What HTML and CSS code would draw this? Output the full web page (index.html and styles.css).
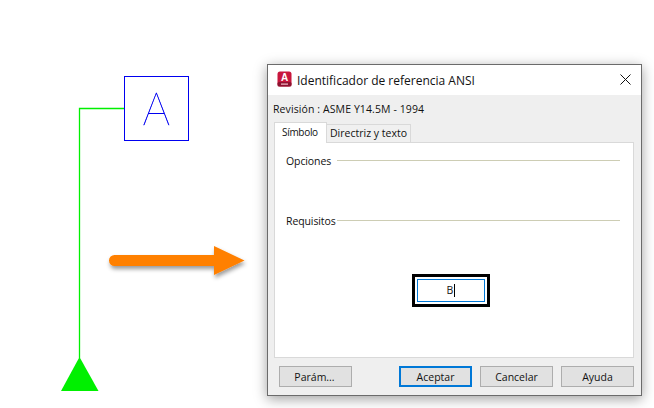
FILE: index.html
```html
<!DOCTYPE html>
<html lang="es">
<head>
<meta charset="utf-8">
<title>Identificador de referencia ANSI</title>
<link rel="stylesheet" href="styles.css">
</head>
<body>
<main class="canvas">
  <svg class="drawing" width="654" height="408" viewBox="0 0 654 408" aria-hidden="true">
    <defs>
      <filter id="arrow-shadow" x="-10%" y="-40%" width="120%" height="200%">
        <feDropShadow dx="1" dy="3" stdDeviation="2" flood-color="#000" flood-opacity="0.4"/>
      </filter>
    </defs>
    <path class="leader" d="M124 108.5H79.500V358"/>
    <polygon class="datum" points="79.500,357 98.500,391 61,391"/>
    <rect class="box" x="124.500" y="76.500" width="64" height="64"/>
    <path class="arrow" filter="url(#arrow-shadow)" d="M114.500 255H214V246L244.500 260.500L214 275V266H114.500A5.500 5.500 0 0 1 114.500 255Z"/>
  </svg>
  <span class="cad-letter">A</span>

  <section class="dialog">
    <header class="titlebar">
      <svg class="app-icon" width="15" height="16" viewBox="0 0 15 16" aria-hidden="true">
        <rect x="0.500" y="0.500" width="14" height="15" rx="2.500" fill="#c8173d"/>
        <rect x="0.500" y="11" width="14" height="4.500" rx="1.500" fill="#8e1230"/>
        <rect x="4" y="12.300" width="7" height="1.700" fill="#d88a9c"/>
        <text x="7.500" y="10" class="icon-letter" text-anchor="middle">A</text>
      </svg>
      <h1 class="title">Identificador de referencia ANSI</h1>
      <svg class="close" width="11" height="11" viewBox="0 0 11 11" aria-hidden="true">
        <path d="M.5 .5L10.500 10.500M10.500 .5L.5 10.500"/>
      </svg>
    </header>
    <div class="client">
      <p class="revision">Revisión : ASME Y14.5M - 1994</p>
      <div class="tabs">
        <span class="tab tab-active">Símbolo</span>
        <span class="tab">Directriz y texto</span>
      </div>
      <div class="panel">
        <div class="group"><span>Opciones</span><i class="rule"></i></div>
        <div class="group group-req"><span>Requisitos</span><i class="rule"></i></div>
        <div class="identifier">
          <div class="input"><span class="value">B</span><i class="caret"></i></div>
        </div>
      </div>
      <footer class="buttons">
        <button class="btn btn-params">Parám...</button>
        <button class="btn btn-default">Aceptar</button>
        <button class="btn">Cancelar</button>
        <button class="btn">Ayuda</button>
      </footer>
    </div>
  </section>
</main>
</body>
</html>
```
FILE: styles.css
```css
* { box-sizing: border-box; }
html, body { margin: 0; padding: 0; background: #fff; }
.canvas {
  position: relative;
  width: 654px;
  height: 408px;
  overflow: hidden;
  font-family: "Open Sans", "Noto Sans", sans-serif;
  font-size: 10.500px;
  color: #111;
}
.drawing { position: absolute; left: 0; top: 0; }
.leader { fill: none; stroke: #00f000; stroke-width: 1.300; }
.datum { fill: #00f000; }
.box { fill: none; stroke: #0000f0; stroke-width: 1; shape-rendering: crispEdges; }
.arrow { fill: #ff8000; }
.cad-letter {
  position: absolute;
  left: 124px;
  top: 76px;
  width: 65px;
  height: 65px;
  line-height: 65px;
  text-align: center;
  font-family: "Lato", sans-serif;
  font-weight: 100;
  font-size: 45px;
  color: #0000f0;
  -webkit-text-stroke: 0.5px #0000f0;
  transform: scaleX(0.95);
}
.dialog {
  position: absolute;
  left: 267px;
  top: 64px;
  width: 375px;
  height: 332px;
  display: flex;
  flex-direction: column;
  background: #efefef;
  border: 1px solid #6b6b6b;
  box-shadow: 0 3px 12px rgba(0, 0, 0, 0.38);
}
.titlebar {
  height: 30px;
  flex: none;
  display: flex;
  align-items: center;
  background: #fff;
  padding: 0 10px 0 9px;
}
.app-icon { flex: none; margin: 0 5px 2px 0; }
.icon-letter { font: 700 10px "Liberation Sans", sans-serif; fill: #fff; }
.title {
  margin: 0;
  flex: 1;
  font-size: 12px;
  font-weight: 400;
  color: #111;
  white-space: nowrap;
}
.close { flex: none; fill: none; margin-bottom: 2px; }
.close path { stroke: #111; stroke-width: 1; }
.client {
  flex: 1;
  display: flex;
  flex-direction: column;
  padding: 0 7px 8px 6px;
  min-height: 0;
}
.revision { margin: 0 0 0 -1px; height: 27px; padding-top: 6px; line-height: 16px; white-space: nowrap; letter-spacing: 0.1px; }
.tabs { display: flex; align-items: flex-end; height: 20px; position: relative; z-index: 1; }
.tab {
  display: block;
  height: 18px;
  padding: 0 3px;
  line-height: 17px;
  background: #f0f0f0;
  border: 1px solid #d9d9d9;
  border-bottom: 0;
  margin-left: -1px;
  white-space: nowrap;
}
.tab-active {
  height: 21px;
  margin: 0 0 -1px 0;
  width: 53px;
  padding: 0 0 0 7px;
  background: #fff;
  line-height: 18px;
  font-size: 10px;
  letter-spacing: -0.3px;
}
.panel {
  height: 216px;
  flex: none;
  background: #fff;
  border: 1px solid #d9d9d9;
  display: flex;
  flex-direction: column;
  padding: 9px 13px 0 11px;
}
.group { display: flex; align-items: center; height: 16px; }
.group-req { margin-top: 44px; }
.group span { width: 51px; padding-top: 2px; letter-spacing: -0.1px; white-space: nowrap; }
.rule { display: block; flex: 1; height: 1px; background: #cdcdb4; }
.identifier {
  align-self: center;
  margin: 46px 0 0 0;
  width: 78px;
  height: 33px;
  border: 3px solid #000;
  padding: 2px;
  position: relative;
  left: -2px;
}
.input {
  height: 23px;
  border: 1px solid #0078d7;
  display: flex;
  align-items: center;
  justify-content: center;
}
.value { line-height: 1; }
.caret { display: block; width: 1px; height: 13px; background: #000; margin-left: 1px; }
.buttons { display: flex; margin-top: 8px; padding-left: 5px; gap: 8px; }
.btn {
  width: 73px;
  height: 21px;
  padding: 0;
  font: inherit;
  color: #111;
  background: #e1e1e1;
  border: 1px solid #adadad;
}
.btn-params { margin-right: 39px; padding-right: 2px; }
.btn-default { border: 2px solid #0078d7; }
```
